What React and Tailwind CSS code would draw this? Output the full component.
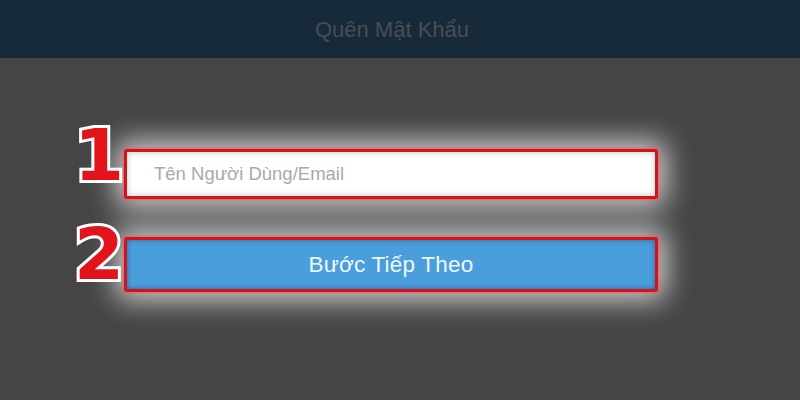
export default function App() {
  const num =
    "w-[50px] shrink-0 text-right leading-none font-bold text-[72px] text-[#e3131b] [font-family:'DejaVu_Sans',sans-serif] [-webkit-text-stroke:6px_#ffffff] [paint-order:stroke_fill] relative z-10";
  const frame =
    "w-[534px] rounded-[3px] border-[3px] border-[#d0161d]";

  return (
    <div className="w-[800px] h-[400px] bg-[#454545] overflow-hidden font-['Liberation_Sans',Arial,sans-serif]">
      <div className="h-[58px] bg-[#172a3a] flex items-center justify-center pr-4">
        <span className="text-[22px] text-[#4a4d51]">Quên Mật Khẩu</span>
      </div>

      <div className="pt-[91px] pl-[74px] flex flex-col gap-[38px]">
        <div className="flex items-start">
          <div className={num + " -mt-[30px] -mr-[2px] pr-[1px]"}>1</div>
          <div className={frame + " ml-[2px] h-[50px] bg-white flex items-center pl-[27px] shadow-[inset_0_0_6px_rgba(0,0,0,0.25),0_0_2px_1px_rgba(255,80,80,0.8),0_0_28px_8px_rgba(255,255,255,0.75)]"}>
            <span className="text-[18.5px] text-[#a9a9a9]">Tên Người Dùng/Email</span>
          </div>
        </div>

        <div className="flex items-start">
          <div className={num + " -mt-[19px] -mr-[2px]"}>2</div>
          <div className={frame + " ml-[2px] h-[55px] bg-[#4a9edb] flex items-center justify-center shadow-[inset_0_0_5px_rgba(0,40,90,0.5),0_0_2px_1px_rgba(255,80,80,0.8),0_0_28px_8px_rgba(255,255,255,0.75)]"}>
            <span className="text-[22.5px] tracking-[0.2px] text-[#eef8ff]">Bước Tiếp Theo</span>
          </div>
        </div>
      </div>
    </div>
  );
}
